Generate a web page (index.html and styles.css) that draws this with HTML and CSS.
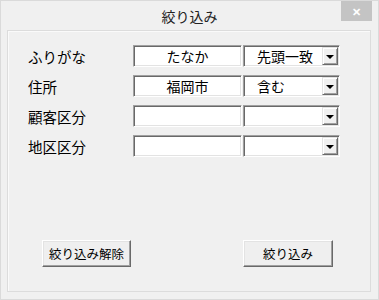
FILE: index.html
```html
<!DOCTYPE html>
<html lang="ja">
<head>
    <meta charset="UTF-8">
    <meta name="viewport" content="width=device-width, initial-scale=1.0">
    <title>絞り込み</title>
    <link rel="stylesheet" href="styles.css">
</head>
<body>
    <div class="window">
        <div class="title-bar">
            <span class="title">絞り込み</span>
            <div class="close-btn">&#x2715;</div>
        </div>

        <div class="panel">
            <div class="fields">
                <div class="field-label">ふりがな</div>
                <div class="text-box">たなか</div>
                <div class="combo">
                    <span class="combo-text">先頭一致</span>
                    <span class="drop-btn"><span class="arrow"></span></span>
                </div>

                <div class="field-label">住所</div>
                <div class="text-box">福岡市</div>
                <div class="combo">
                    <span class="combo-text">含む</span>
                    <span class="drop-btn"><span class="arrow"></span></span>
                </div>

                <div class="field-label">顧客区分</div>
                <div class="text-box"></div>
                <div class="combo">
                    <span class="combo-text"></span>
                    <span class="drop-btn"><span class="arrow"></span></span>
                </div>

                <div class="field-label">地区区分</div>
                <div class="text-box"></div>
                <div class="combo">
                    <span class="combo-text"></span>
                    <span class="drop-btn"><span class="arrow"></span></span>
                </div>
            </div>

            <div class="buttons">
                <button class="win-btn">絞り込み解除</button>
                <button class="win-btn">絞り込み</button>
            </div>
        </div>
    </div>
</body>
</html>
```

FILE: styles.css
```css
body {
    margin: 0;
    padding: 0;
    background: #f0f0f0;
    font-family: "Noto Sans CJK JP", "Noto Sans", sans-serif;
    color: #000;
}

.window {
    width: 379px;
    height: 300px;
    box-sizing: border-box;
    border: 1px solid #dadada;
    background: #f0f0f0;
    display: flex;
    flex-direction: column;
}

.title-bar {
    height: 29px;
    display: flex;
    align-items: center;
    justify-content: center;
    position: relative;
}

.title {
    font-size: 14px;
    color: #222;
    margin-top: 1px;
}

.close-btn {
    position: absolute;
    top: 0;
    right: 6px;
    width: 31px;
    height: 20px;
    background: #c4c4c4;
    color: #fff;
    font-size: 11px;
    font-weight: bold;
    display: flex;
    align-items: center;
    justify-content: center;
}

.panel {
    flex: 1;
    margin: 0 7px 7px 6px;
    border: 1px solid #dcdcdc;
    box-shadow: inset 1px 1px #fafafa;
    display: flex;
    flex-direction: column;
}

.fields {
    display: grid;
    grid-template-columns: 105px 109px 97px;
    grid-auto-rows: 22px;
    row-gap: 8px;
    column-gap: 1px;
    padding: 14px 0 0 19px;
}

.field-label {
    font-size: 14.5px;
    display: flex;
    align-items: center;
    padding-left: 1px;
}

.text-box,
.combo {
    box-sizing: border-box;
    background: #fff;
    border: 1px solid;
    border-color: #a0a0a0 #ffffff #ffffff #a0a0a0;
    box-shadow: inset 1px 1px #696969, inset -1px -1px #e3e3e3;
    font-size: 14px;
}

.text-box {
    display: flex;
    align-items: center;
    justify-content: center;
}

.combo {
    display: flex;
    align-items: center;
    padding: 1px 1px 1px 13px;
}

.combo-text {
    flex: 1;
}

.drop-btn {
    width: 16px;
    height: 18px;
    box-sizing: border-box;
    background: #f0f0f0;
    border: 1px solid;
    border-color: #e3e3e3 #696969 #696969 #e3e3e3;
    box-shadow: inset 1px 1px #fff, inset -1px -1px #a0a0a0;
    display: flex;
    align-items: center;
    justify-content: center;
}

.arrow {
    width: 0;
    height: 0;
    border-left: 4px solid transparent;
    border-right: 4px solid transparent;
    border-top: 4px solid #000;
    margin-top: 1px;
}

.buttons {
    display: flex;
    gap: 112px;
    margin-top: 83px;
    padding-left: 34px;
}

.win-btn {
    width: 89px;
    height: 27px;
    box-sizing: border-box;
    background: #efefef;
    border: 1px solid;
    border-color: #ffffff #696969 #696969 #ffffff;
    box-shadow: inset -1px -1px #a0a0a0, inset 1px 1px #e3e3e3;
    font-family: "Noto Sans CJK JP", "Noto Sans", sans-serif;
    font-size: 12.5px;
    color: #000;
    padding: 0;
}

.win-btn + .win-btn {
    width: 90px;
}
```
